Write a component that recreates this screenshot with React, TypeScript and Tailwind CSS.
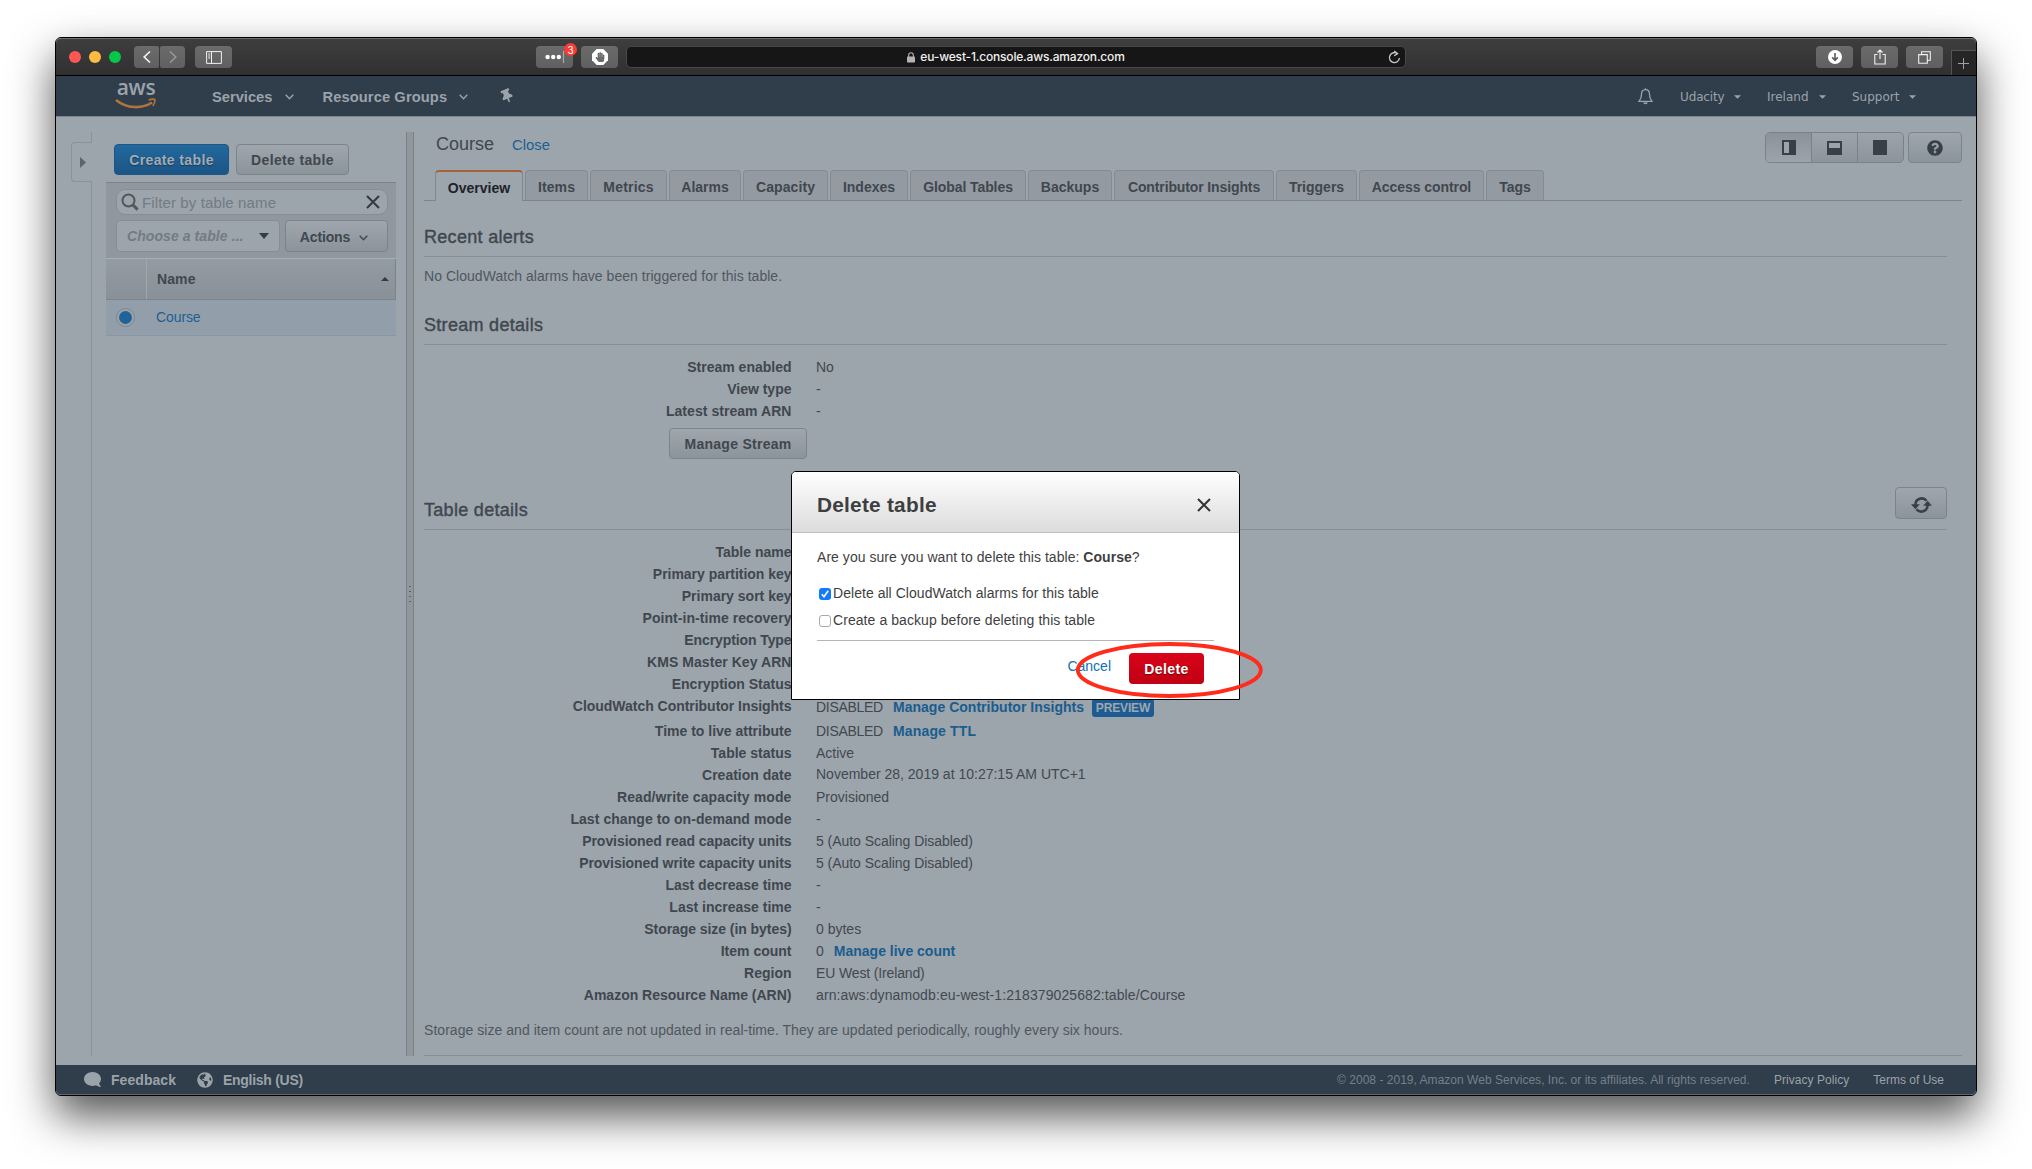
import React from 'react';
import type { ReactNode } from 'react';
import { FaComment, FaGlobeAmericas, FaHandPaper, FaQuestionCircle, FaThumbtack } from 'react-icons/fa';

const TABS: { label: string; cls: string }[] = [
  { label: 'Overview', cls: 'w-[88px]' },
  { label: 'Items', cls: 'w-[63px] tracking-[0.1px]' },
  { label: 'Metrics', cls: 'w-[77px] tracking-[0.2px]' },
  { label: 'Alarms', cls: 'w-[72px]' },
  { label: 'Capacity', cls: 'w-[85px] tracking-[0.08px]' },
  { label: 'Indexes', cls: 'w-[78px]' },
  { label: 'Global Tables', cls: 'w-[116px] tracking-[-0.08px]' },
  { label: 'Backups', cls: 'w-[84px]' },
  { label: 'Contributor Insights', cls: 'w-[160px] tracking-[-0.12px]' },
  { label: 'Triggers', cls: 'w-[81px]' },
  { label: 'Access control', cls: 'w-[125px] tracking-[-0.07px]' },
  { label: 'Tags', cls: 'w-[58px]' },
];

function ToolbarButton({ children, className = '' }: { children: ReactNode; className?: string }) {
  return (
    <div className={`flex h-[22px] items-center justify-center rounded-[4px] bg-gradient-to-b from-[#6b6b6b] to-[#606060] ${className}`}>
      {children}
    </div>
  );
}

function BrowserToolbar() {
  return (
    <div className="flex h-[38px] shrink-0 items-center rounded-t-[5px] border-t border-b border-t-[#6d6d6d] border-b-black bg-gradient-to-b from-[#3e3e3e] to-[#303030] pl-[13px]">
      <div className="flex gap-2">
        <span className="h-3 w-3 rounded-full bg-[#fc5753]" />
        <span className="h-3 w-3 rounded-full bg-[#fdbc40]" />
        <span className="h-3 w-3 rounded-full bg-[#06c748]" />
      </div>
      <ToolbarButton className="ml-[13px] w-[25px] rounded-r-[2px]">
        <svg width="10" height="14" viewBox="0 0 10 14" fill="none" stroke="#f4f4f4" strokeWidth="1.7"><path d="M8 1.5 2.2 7 8 12.5" /></svg>
      </ToolbarButton>
      <ToolbarButton className="ml-px w-[25px] rounded-l-[2px]">
        <svg width="10" height="14" viewBox="0 0 10 14" fill="none" stroke="#999" strokeWidth="1.5"><path d="M2 1.5 7.8 7 2 12.5" /></svg>
      </ToolbarButton>
      <ToolbarButton className="ml-[10px] w-[37px]">
        <svg width="16" height="13" viewBox="0 0 16 13" fill="none" stroke="#f0f0f0"><path d="M.6.6h14.8v11.8H.6zM5.5.6v11.8M2.2 3h2M2.2 5h2M2.2 7h2" /></svg>
      </ToolbarButton>
      <ToolbarButton className="relative ml-[304px] w-[37px]">
        <svg className="-mt-px ml-px" width="20" height="12" viewBox="0 0 20 12">
          <circle cx="2.6" cy="6" r="2.2" fill="#fff" />
          <circle cx="8.2" cy="6" r="2.2" fill="#fff" />
          <circle cx="13.8" cy="6" r="2.2" fill="#fff" />
          <path d="M18.5 0v12" stroke="#aaa" strokeWidth="1.2" />
        </svg>
        <span className="absolute -top-[3px] -right-[4px] flex h-[13px] w-[13px] items-center justify-center rounded-full bg-[#fc3b36] font-['Inter'] text-[10px] leading-none text-white">3</span>
      </ToolbarButton>
      <ToolbarButton className="relative ml-2 w-[37px]">
        <svg width="16" height="16" viewBox="0 0 16 16" fill="#fff"><path d="M4.7 0h6.6L16 4.7v6.6L11.3 16H4.7L0 11.3V4.7z" /></svg>
        <FaHandPaper className="absolute" size={10} color="#6a6a6a" />
      </ToolbarButton>
      <div className="ml-[8px] flex h-[22px] w-[780px] items-center rounded-[5px] border border-[#484848] bg-[#161616]">
        <div className="flex flex-1 items-center justify-center pl-[4px]">
          <svg className="mr-[5px]" width="8" height="11" viewBox="0 0 8 11"><rect y="4.5" width="8" height="6" rx=".8" fill="#b4b4b4" /><path d="M1.7 5V3a2.3 2.3 0 0 1 4.6 0v2" fill="none" stroke="#b4b4b4" strokeWidth="1.1" /></svg>
          <span className="font-['Inter'] text-[12px] font-medium tracking-[-0.18px] text-[#f0f0f0]">eu-west-1.console.aws.amazon.com</span>
        </div>
        <svg className="-ml-[13px] mr-[4px]" width="13" height="14" viewBox="0 0 13 14" fill="none" stroke="#c8c8c8" strokeWidth="1.3"><path d="M9.6 3.8A5 5 0 1 0 11.4 8M6.2 1l3.4 2.6-3.4 2.2" /></svg>
      </div>
      <ToolbarButton className="ml-[410px] w-[37px]">
        <svg width="14" height="14" viewBox="0 0 14 14"><circle cx="7" cy="7" r="7" fill="#fff" /><path d="M7 3v7M4.2 7.4 7 10.3l2.8-2.9" fill="none" stroke="#5c5c5c" strokeWidth="1.6" /></svg>
      </ToolbarButton>
      <ToolbarButton className="ml-2 w-[37px]">
        <svg width="12" height="16" viewBox="0 0 12 16" fill="none" stroke="#f0f0f0" strokeWidth="1.1"><path d="M3.5 5.5H.8v9.5h10.4V5.5H8.5M6 10V1M3.4 3.5 6 1l2.6 2.5" /></svg>
      </ToolbarButton>
      <ToolbarButton className="ml-2 w-[37px]">
        <svg width="13" height="13" viewBox="0 0 13 13" fill="none" stroke="#f0f0f0" strokeWidth="1.1"><path d="M.7 3.6h8.6v8.6H.7zM3.6 3.4V.7h8.7v8.6H9.5" /></svg>
      </ToolbarButton>
      <div className="ml-auto flex h-[25px] w-[25px] items-center justify-center self-end border-t border-l border-[#555] bg-[#262626] pr-px">
        <svg width="11" height="11" viewBox="0 0 11 11" stroke="#a0a0a0"><path d="M5.5 0v11M0 5.5h11" /></svg>
      </div>
    </div>
  );
}

function ThinChevron({ className = '' }: { className?: string }) {
  return (
    <svg className={className} width="9" height="6" viewBox="0 0 9 6" fill="none" stroke="currentColor" strokeWidth="1.4"><path d="M.7.8 4.5 4.8 8.3.8" /></svg>
  );
}

function Caret({ className = '' }: { className?: string }) {
  return <svg className={className} width="7" height="4" viewBox="0 0 8 4" fill="currentColor"><path d="M0 0h8L4 4z" /></svg>;
}

function AwsNav() {
  return (
    <div className="flex h-[41px] shrink-0 items-center border-b border-[#7c858d] bg-[#303d4a] pl-[59px] text-[#9ba3aa]">
      <div className="-mt-[2px] flex w-[42px] flex-col items-center">
        <span className="h-[18px] font-['Open_Sans'] text-[21px] font-semibold leading-[13px] tracking-[-0.3px]">aws</span>
        <svg className="-mt-px" width="42" height="12" viewBox="0 0 42 12" fill="none" stroke="#b0753c"><path d="M1 2c11 9 26 9 36 2.5" strokeWidth="2.6" /><path d="M33.5 2c3-1 5-1 6.3-.6.4 2-.2 4.2-2 6.600" strokeWidth="1.6" /></svg>
      </div>
      <span className="ml-[55px] pt-[2px] text-[14.7px] font-bold">Services</span>
      <ThinChevron className="mt-px ml-[13px]" />
      <span className="ml-[28px] pt-[2px] text-[14.7px] font-bold tracking-[0.1px]">Resource Groups</span>
      <ThinChevron className="mt-px ml-[12px]" />
      <FaThumbtack className="ml-[32px] -rotate-[22deg]" size={14} />
      <svg className="mt-px ml-auto" width="15" height="17" viewBox="0 0 15 17" fill="none" stroke="currentColor" strokeWidth="1.3">
        <path d="M7.5 1.6c-3 0-4 2.2-4 4.6 0 4-1 5.5-2.5 7.2h13c-1.5-1.7-2.5-3.2-2.5-7.2 0-2.4-1-4.6-4-4.6zM7.5.3v1.3" />
        <path d="M5.8 14.5c.3 1.6 3.1 1.6 3.4 0" fill="currentColor" />
      </svg>
      <div className="ml-[27px] flex items-center pt-px font-['DejaVu_Sans'] text-[12px]">
        <span className="w-[45px] tracking-[-0.13px]">Udacity</span>
        <Caret className="ml-[9px]" />
        <span className="ml-[26px] w-[42px]">Ireland</span>
        <Caret className="ml-[10px]" />
        <span className="ml-[26px] w-[48px]">Support</span>
        <Caret className="mr-[60px] ml-[9px]" />
      </div>
    </div>
  );
}

function GreyButton({ children, className = '' }: { children: ReactNode; className?: string }) {
  return (
    <button className={`flex items-center justify-center rounded-[4px] border border-[#7b838b] bg-gradient-to-b from-[#9fa6ae] to-[#8b939b] font-bold text-[#40474e] ${className}`}>
      {children}
    </button>
  );
}

function LeftRail() {
  return (
    <div className="flex w-[36px] shrink-0 flex-col">
      <div className="h-[10px] border-r border-[#8a9199]" />
      <div className="ml-[15px] flex h-[40px] items-center rounded-l-[4px] border border-r-0 border-[#8a9199] pl-[8px]">
        <svg width="6" height="11" viewBox="0 0 6 11" fill="#5c646c"><path d="M0 0l6 5.5L0 11z" /></svg>
      </div>
      <div className="flex-1 border-r border-[#8a9199]" />
    </div>
  );
}

function Sidebar() {
  return (
    <div className="ml-[14px] flex w-[290px] shrink-0 flex-col pt-3">
      <div className="flex gap-[7px] pl-2">
        <button className="h-[31px] w-[115px] rounded-[4px] border border-[#1c5684] bg-gradient-to-b from-[#22699d] to-[#1c5586] pt-[2px] text-[14px] font-bold tracking-[0.38px] text-[#a3abb3] [text-shadow:0_1px_1px_#123a5c]">Create table</button>
        <GreyButton className="h-[31px] w-[113px] pt-[2px] tracking-[0.35px]">Delete table</GreyButton>
      </div>
      <div className="mt-[7px] h-[76px] border-t border-[#7b838b] bg-[#90979e] pt-[6px] pr-[8px] pl-[10px]">
        <div className="flex h-[26px] w-[272px] items-center rounded-[9px] border border-[#858d95] bg-[#9ca4ac] pl-[4px]">
          <svg width="18" height="18" viewBox="0 0 18 18" fill="none" stroke="#50575e"><circle cx="7.5" cy="7.5" r="6" strokeWidth="2" /><path d="M12 12l4.6 4.6" strokeWidth="3" /></svg>
          <span className="ml-[3px] pt-[2px] text-[15px] tracking-[0.12px] text-[#737b83]">Filter by table name</span>
          <svg className="mr-[7px] ml-auto" width="14" height="14" viewBox="0 0 14 14" stroke="#343b42" strokeWidth="2.1"><path d="M1 1l12 12M13 1 1 13" /></svg>
        </div>
        <div className="mt-[5px] flex gap-[5px]">
          <div className="flex h-[32px] w-[164px] shrink-0 items-center rounded-[4px] border border-[#858d95] bg-[#9ca4ac] pl-[10px]">
            <span className="text-[14px] font-bold tracking-[0.08px] italic text-[#737b83]">Choose a table ...</span>
            <svg className="mr-[10px] ml-auto" width="10" height="6" viewBox="0 0 10 6" fill="#343b42"><path d="M0 0h10L5 6z" /></svg>
          </div>
          <GreyButton className="h-[32px] w-[103px] shrink-0 pt-[2px] pr-[5px] tracking-[-0.15px]">
            Actions
            <ThinChevron className="mt-px ml-[9px]" />
          </GreyButton>
        </div>
      </div>
      <div className="flex h-[42px] border-t border-b border-t-[#a7aeb5] border-b-[#7b838b] bg-gradient-to-b from-[#949ca3] to-[#899097] font-bold text-[#40474e]">
        <div className="w-[41px] border-r border-[#a0a7ae]" />
        <div className="flex flex-1 items-center border-r border-[#7b838b] pl-[10px] tracking-[0.1px]">
          Name
          <svg className="mr-[6px] mb-px ml-auto" width="8" height="4" viewBox="0 0 8 4" fill="#343b42"><path d="M4 0l4 4H0z" /></svg>
        </div>
      </div>
      <div className="flex h-[36px] items-center border-b border-[#8897a5] bg-[#929faa] pl-[10px]">
        <span className="flex h-[19px] w-[19px] items-center justify-center rounded-full border border-[#7b868f] bg-[#9ca3a8]">
          <span className="h-[13px] w-[13px] rounded-full bg-[#20639a]" />
        </span>
        <span className="ml-[21px] tracking-[-0.1px] text-[#1c608f]">Course</span>
      </div>
    </div>
  );
}

function ViewButtons() {
  return (
    <div className="ml-auto flex gap-[4px]">
      <div className="flex h-[31px] w-[139px] overflow-hidden rounded-[5px] border border-[#79818a] bg-gradient-to-b from-[#9ca3ab] to-[#8d949c]">
        <div className="flex w-[46px] items-center justify-center border-r border-[#79818a] bg-gradient-to-b from-[#8b929a] to-[#9ca3ab]">
          <svg width="14" height="15" viewBox="0 0 14 15"><path d="M0 0h14v15H0z" fill="#373f47" /><path d="M2 2h5v11H2z" fill="#9ca3ab" /></svg>
        </div>
        <div className="flex w-[46px] items-center justify-center border-r border-[#79818a]">
          <svg width="15" height="14" viewBox="0 0 15 14"><path d="M0 0h15v14H0z" fill="#373f47" /><path d="M2 2h11v5H2z" fill="#9ca3ab" /></svg>
        </div>
        <div className="flex flex-1 items-center justify-center pr-px"><span className="h-[15px] w-[14px] bg-[#373f47]" /></div>
      </div>
      <GreyButton className="h-[31px] w-[54px]"><FaQuestionCircle size={16} color="#373f47" /></GreyButton>
    </div>
  );
}

function SectionHeading({ children, action, className = '' }: { children: ReactNode; action?: ReactNode; className?: string }) {
  return (
    <div className={`mr-[15px] flex h-[40px] items-start justify-between border-b border-[#868e96] ${className}`}>
      <h2 className="text-[18px] leading-[41px] tracking-[0.3px] text-[#40474e] [-webkit-text-stroke:0.4px_#40474e]">{children}</h2>
      {action}
    </div>
  );
}

function Row({ label, children, className = 'h-[22px]', labelClass = '' }: { label: string; children?: ReactNode; className?: string; labelClass?: string }) {
  return (
    <div className={`flex leading-[22px] whitespace-nowrap ${className}`}>
      <div className={`w-[367.5px] text-right font-bold ${labelClass}`}>{label}</div>
      <div className="ml-[24.5px] flex text-[#42494f]">{children}</div>
    </div>
  );
}

function RowLink({ children, className = 'ml-[10px]' }: { children: ReactNode; className?: string }) {
  return <a className={`font-bold text-[#1a5d8d] ${className}`}>{children}</a>;
}

function Main() {
  return (
    <div className="flex min-w-0 flex-1 flex-col pr-[14px] pl-[10px] text-[#40474e]">
      <div className="flex h-[38px] items-start">
        <span className="ml-[12px] text-[18px] leading-[25px]">Course</span>
        <a className="ml-[18px] text-[14.8px] leading-[27px] text-[#1c608f]">Close</a>
        <ViewButtons />
      </div>
      <div className="flex h-[31px] gap-[2px] border-b border-[#7b838b] pl-[11px]">
        {TABS.map((t, i) => (
          <div
            key={t.label}
            className={`rounded-t-[4px] border border-b-0 text-center font-bold ${t.cls} ${
              i === 0
                ? 'h-[31px] border-t-2 border-[#7f878f] border-t-[#a5623a] bg-[#9ca4ac] leading-[33px] text-[#1d232a]'
                : 'h-[30px] border-[#838b93] bg-[#939aa2] leading-[33px]'
            }`}
          >
            {t.label}
          </div>
        ))}
      </div>
      <SectionHeading className="mt-4">Recent alerts</SectionHeading>
      <p className="leading-[38px] tracking-[0.04px] text-[#50575e]">No CloudWatch alarms have been triggered for this table.</p>
      <SectionHeading className="mt-[10px]">Stream details</SectionHeading>
      <div className="pt-[11px]">
        <Row label="Stream enabled">No</Row>
        <Row label="View type">-</Row>
        <Row label="Latest stream ARN" labelClass="tracking-[0.05px]">-</Row>
      </div>
      <GreyButton className="mt-[6px] ml-[245px] h-[31px] w-[138px] pt-[2px] tracking-[0.28px]">Manage Stream</GreyButton>
      <SectionHeading
        className="mt-[31px]"
        action={
          <GreyButton className="-mt-[3px] h-[32px] w-[52px]">
            <svg className="mt-[3px]" width="21" height="18" viewBox="0 0 20 17" fill="none" stroke="#373f47" strokeWidth="2.4">
              <path d="M4.2 9.5V8a6 6 0 0 1 10.6-3.6M15.8 7.5V9a6 6 0 0 1-10.6 3.6" />
              <path d="M0 7.8h8.4L4.2 12.500zM20 9.2h-8.4L15.8 4.500z" fill="#373f47" stroke="none" />
            </svg>
          </GreyButton>
        }
      >
        Table details
      </SectionHeading>
      <div className="pt-[11px]">
        <Row label="Table name" />
        <Row label="Primary partition key" labelClass="tracking-[-0.03px]" />
        <Row label="Primary sort key" />
        <Row label="Point-in-time recovery" labelClass="tracking-[0.05px]" />
        <Row label="Encryption Type" labelClass="tracking-[-0.1px]" />
        <Row label="KMS Master Key ARN" labelClass="tracking-[0.06px]" />
        <Row label="Encryption Status" />
        <Row label="CloudWatch Contributor Insights" className="h-[25px]" labelClass="tracking-[-0.03px]">
          <span className="w-[67px] pt-px tracking-[-0.3px]">DISABLED</span>
          <RowLink className="ml-[10px] w-[191px] pt-px tracking-[0.02px]">Manage Contributor Insights</RowLink>
          <span className="mt-[4px] ml-[8px] h-[18px] w-[62px] rounded-[3px] bg-[#1d5c92] text-center text-[12px] font-bold leading-[18px] tracking-[-0.14px] text-[#9fa7af]">PREVIEW</span>
        </Row>
        <Row label="Time to live attribute">
          <span className="w-[67px] tracking-[-0.3px]">DISABLED</span>
          <RowLink className="ml-[10px] tracking-[0.15px]">Manage TTL</RowLink>
        </Row>
        <Row label="Table status">Active</Row>
        <Row label="Creation date"><span className="-mt-px">November 28, 2019 at 10:27:15 AM UTC+1</span></Row>
        <Row label="Read/write capacity mode" labelClass="tracking-[0.11px]">Provisioned</Row>
        <Row label="Last change to on-demand mode" labelClass="tracking-[0.06px]">-</Row>
        <Row label="Provisioned read capacity units" labelClass="tracking-[-0.05px]"><span className="tracking-[-0.04px]">5 (Auto Scaling Disabled)</span></Row>
        <Row label="Provisioned write capacity units" labelClass="tracking-[-0.05px]"><span className="tracking-[-0.04px]">5 (Auto Scaling Disabled)</span></Row>
        <Row label="Last decrease time">-</Row>
        <Row label="Last increase time">-</Row>
        <Row label="Storage size (in bytes)" labelClass="tracking-[-0.06px]">0 bytes</Row>
        <Row label="Item count">0<RowLink>Manage live count</RowLink></Row>
        <Row label="Region"><span className="tracking-[-0.14px]">EU West (Ireland)</span></Row>
        <Row label="Amazon Resource Name (ARN)"><span className="tracking-[0.1px]">arn:aws:dynamodb:eu-west-1:218379025682:table/Course</span></Row>
      </div>
      <p className="mt-[13px] leading-[22px] tracking-[0.04px] text-[#50575e]">Storage size and item count are not updated in real-time. They are updated periodically, roughly every six hours.</p>
      <div className="mt-[14px] h-px bg-[#868e96]" />
    </div>
  );
}

function Footer() {
  return (
    <div className="flex h-[30px] shrink-0 items-center rounded-b-[5px] border-b border-[#5b6670] bg-[#303d4a] pl-[28px] text-[#9ba3aa]">
      <FaComment size={17} className="-scale-x-100" />
      <span className="ml-[10px] w-[66px] pt-px font-bold tracking-[0.05px]">Feedback</span>
      <FaGlobeAmericas size={16} className="ml-[20px]" />
      <span className="ml-[10px] pt-px font-bold tracking-[-0.28px]">English (US)</span>
      <div className="mr-[32px] ml-auto flex gap-[24px] text-[12px]">
        <span className="tracking-[0.02px] text-[#75808a]">© 2008 - 2019, Amazon Web Services, Inc. or its affiliates. All rights reserved.</span>
        <span className="tracking-[0.05px]">Privacy Policy</span>
        <span>Terms of Use</span>
      </div>
    </div>
  );
}

function DeleteDialog() {
  return (
    <div className="absolute top-[433px] left-[735px] h-[229px] w-[449px] rounded-t-[5px] border border-black bg-white text-[#3f3f3f]">
      <div className="flex h-[61px] items-center rounded-t-[4px] border-b border-[#bfbfbf] bg-gradient-to-b from-white to-[#dcdcdc] pt-[6px] pr-[28px] pl-[25px]">
        <h1 className="text-[20.8px] font-bold tracking-[0.25px]">Delete table</h1>
        <svg className="ml-auto" width="14" height="14" viewBox="0 0 14 14" stroke="#333" strokeWidth="2"><path d="M1 1l12 12M13 1 1 13" /></svg>
      </div>
      <div className="px-[25px]">
        <p className="pt-[13px] leading-[22px] tracking-[0.04px]">Are you sure you want to delete this table: <b>Course</b>?</p>
        <div className="mt-[14px] flex h-[22px] items-center">
          <span className="mt-[2px] ml-[2px] flex h-[12px] w-[12px] items-center justify-center rounded-[3px] bg-[#127bfd]">
            <svg width="8" height="8" viewBox="0 0 8 8" fill="none" stroke="#fff" strokeWidth="1.6"><path d="M.8 4.2 3 6.7 7.2.8" /></svg>
          </span>
          <span className="ml-[2px] tracking-[0.04px]">Delete all CloudWatch alarms for this table</span>
        </div>
        <div className="mt-[5px] flex h-[22px] items-center">
          <span className="mt-[2px] ml-[2px] h-[12px] w-[12px] rounded-[3px] border border-[#a9a9a9]" />
          <span className="ml-[2px] tracking-[0.07px]">Create a backup before deleting this table</span>
        </div>
        <div className="mt-[9px] h-px bg-[#b5b5b5]" />
        <div className="flex justify-end pt-[12px] pr-[10px]">
          <a className="mr-[18px] leading-[26px] text-[#0e70b4]">Cancel</a>
          <button className="h-[31px] w-[75px] rounded-[4px] bg-gradient-to-b from-[#d90419] to-[#c00014] pt-[2px] font-bold tracking-[0.4px] text-white [text-shadow:0_1px_1px_#700]">Delete</button>
        </div>
      </div>
    </div>
  );
}

export default function App() {
  return (
    <div className="h-[1169px] w-[2032px] overflow-hidden bg-white pt-[37px] pl-[55px] font-['Liberation_Sans',sans-serif] text-[14px]">
      <div className="relative flex h-[1059px] w-[1922px] flex-col rounded-[6px] border border-black bg-[#9ca4ac] shadow-[0_20px_44px_rgba(0,0,0,0.68)]">
        <BrowserToolbar />
        <AwsNav />
        <div className="flex min-h-0 flex-1 pt-[15px] pb-[9px]">
          <LeftRail />
          <Sidebar />
          <div className="ml-[10px] flex w-[8px] shrink-0 flex-col items-center justify-center gap-[4px] border-x border-[#798187] bg-[#90989c]">
            <span className="h-px w-[2px] bg-[#5a6268]" />
            <span className="h-px w-[2px] bg-[#5a6268]" />
            <span className="h-px w-[2px] bg-[#5a6268]" />
            <span className="h-px w-[2px] bg-[#5a6268]" />
          </div>
          <Main />
        </div>
        <Footer />
        <DeleteDialog />
        <svg className="absolute top-[602px] left-[1018px]" width="190" height="60" viewBox="0 0 190 60" fill="none" stroke="#ff2c1b" strokeWidth="3.8"><ellipse cx="95.3" cy="30" rx="91.5" ry="26" /></svg>
      </div>
    </div>
  );
}
